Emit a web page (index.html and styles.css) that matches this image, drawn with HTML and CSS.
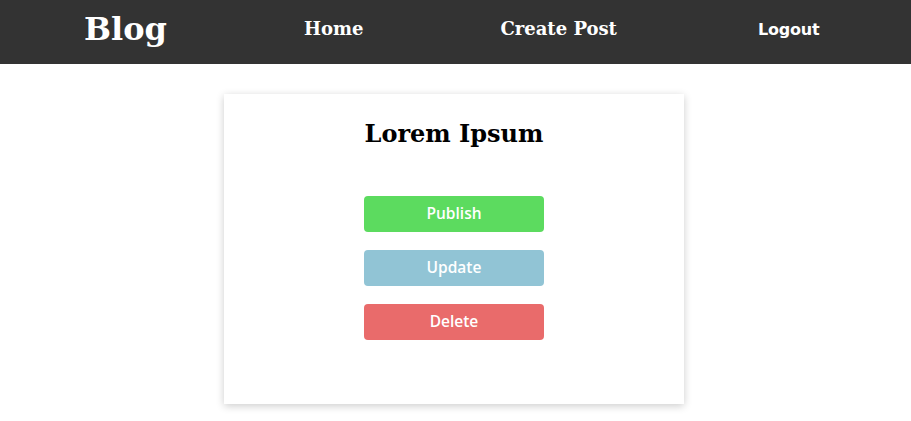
FILE: index.html
```html
<!DOCTYPE html>
<html>
<head>
<meta charset="utf-8">
<link rel="stylesheet" href="styles.css">
</head>
<body>
<nav class="navbar">
  <a class="brand">Blog</a>
  <a class="nav-link">Home</a>
  <a class="nav-link">Create Post</a>
  <a class="nav-logout">Logout</a>
</nav>
<main class="main">
  <section class="card">
    <h2 class="title">Lorem Ipsum</h2>
    <div class="actions">
      <button class="btn btn-publish">Publish</button>
      <button class="btn btn-update">Update</button>
      <button class="btn btn-delete">Delete</button>
    </div>
  </section>
</main>
</body>
</html>
```
FILE: styles.css
```css
* { box-sizing: border-box; }
body {
  margin: 0;
  background: #fff;
  font-family: "DejaVu Serif", serif;
}
.navbar {
  height: 64px;
  background: #333333;
  display: flex;
  align-items: center;
  padding: 0 0 0 84px;
  color: #fff;
}
.brand {
  font-size: 32px;
  font-weight: bold;
  margin-top: -6px;
  margin-right: 137px;
}
.nav-link {
  font-size: 18px;
  font-weight: bold;
  margin-top: -7px;
  margin-right: 137px;
}
.nav-logout {
  font-family: "DejaVu Sans", sans-serif;
  font-size: 16px;
  font-weight: bold;
  margin-top: -5px;
  margin-left: 4px;
  letter-spacing: -0.2px;
}
.main {
  display: flex;
  justify-content: center;
  padding: 30px 3px 20px 0;
}
.card {
  width: 460px;
  height: 310px;
  background: #fff;
  box-shadow: 0 2px 8px rgba(0,0,0,0.2);
  display: flex;
  flex-direction: column;
  align-items: center;
  padding-top: 26px;
}
.title {
  margin: 0;
  font-size: 24px;
  font-weight: bold;
  line-height: 28px;
  color: #000;
}
.actions {
  margin-top: 48px;
  display: flex;
  flex-direction: column;
  gap: 18px;
}
.btn {
  width: 180px;
  height: 36px;
  border: none;
  border-radius: 4px;
  color: #fff;
  font-family: "Open Sans", sans-serif;
  font-weight: 600;
  font-size: 15.5px;
  padding: 0 0 2px;
}
.btn-publish { background: #5cdb5f; }
.btn-update { background: #91c4d5; }
.btn-delete { background: #e96b6b; }
```
